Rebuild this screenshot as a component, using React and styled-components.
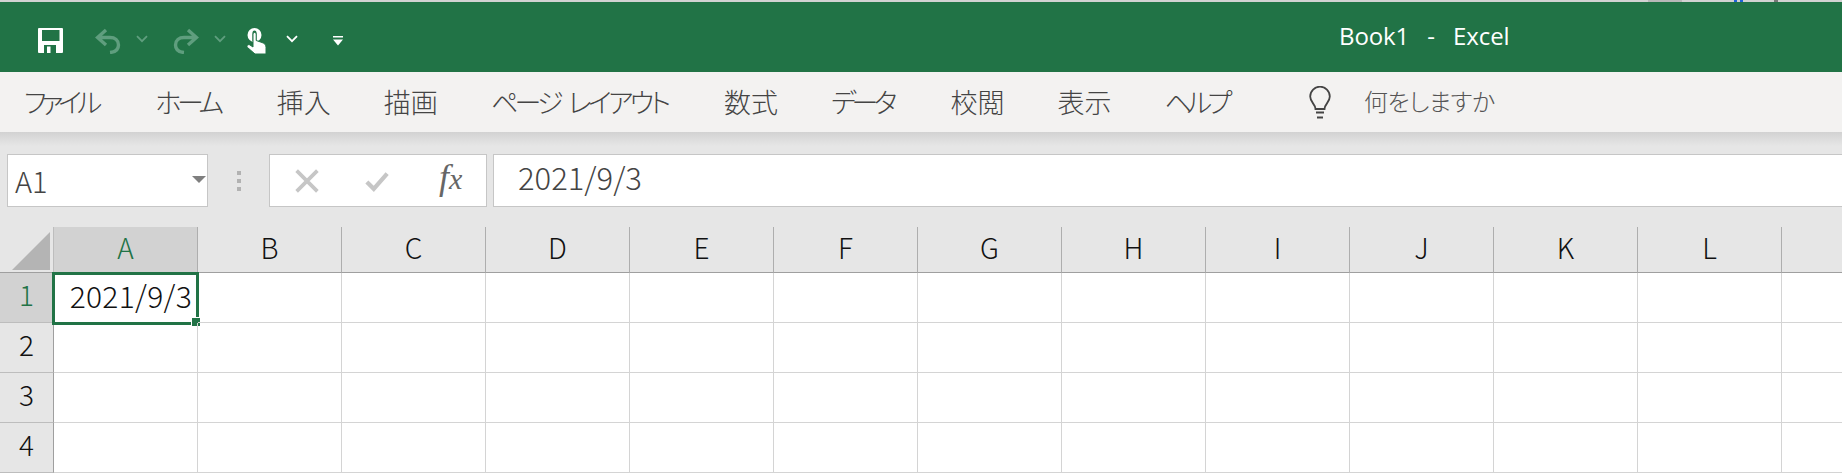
import React from "react";
import styled, { createGlobalStyle } from "styled-components";

const JP = `"Noto Sans CJK JP", "Noto Sans", sans-serif`;
const GREEN = "#217346";

const tabs = [
  { label: "ファイル", tight: 5.1 },
  { label: "ホーム", tight: 4.3 },
  { label: "挿入", tight: 0 },
  { label: "描画", tight: 0 },
  { label: "ページ レイアウト", tight: 3.7 },
  { label: "数式", tight: 0 },
  { label: "データ", tight: 4.5 },
  { label: "校閲", tight: 0 },
  { label: "表示", tight: 0 },
  { label: "ヘルプ", tight: 4.9 },
];
const columns = ["A", "B", "C", "D", "E", "F", "G", "H", "I", "J", "K", "L", ""];
const rows = [1, 2, 3, 4];

const Chevron = ({ faint }) => (
  <ChevronIcon viewBox="0 0 12 8" $faint={faint}>
    <path d="M1 1.2 6 6.2 11 1.2" fill="none" stroke="currentColor" strokeWidth="1.8" />
  </ChevronIcon>
);

const App = () => {
  return (
    <Page>
      <GlobalStyle />
      <TopStrip />
      <TitleBar>
        <QuickAccess>
          <SaveIcon viewBox="0 0 25 25">
            <path
              fillRule="evenodd"
              fill="#fff"
              d="M1 0H24a1 1 0 0 1 1 1V24a1 1 0 0 1-1 1H1a1 1 0 0 1-1-1V1a1 1 0 0 1 1-1ZM4 2V13H21.500V2ZM6 17V25H18V17ZM9 18.500H12.500V25H9Z"
            />
          </SaveIcon>
          <UndoIcon viewBox="0 0 26 26">
            <path
              d="M11 2 2.500 9.500 11 17M3 9.500H15C20 9.500 23.500 12.500 23.500 17S20 24 15 24.500"
              fill="none"
              stroke="currentColor"
              strokeWidth="3.400"
            />
          </UndoIcon>
          <Chevron faint />
          <RedoIcon viewBox="0 0 26 26">
            <path
              d="M15 2 23.500 9.500 15 17M23 9.500H11C6 9.500 2.500 12.500 2.500 17S6 24 11 24.500"
              fill="none"
              stroke="currentColor"
              strokeWidth="3.400"
            />
          </RedoIcon>
          <Chevron faint />
          <TouchIcon viewBox="0 0 20 26">
            <circle cx="8.500" cy="7" r="7" fill="#fff" />
            <path d="M6.500 4.500a2 2 0 0 1 4 0V13H6.500Z" fill={GREEN} />
            <path
              fill="#fff"
              stroke={GREEN}
              strokeWidth="1"
              d="M7 6a1.600 1.600 0 0 1 3.200 0V12.500L16 14.500C19 15.500 20 17 20 19.500V26H9L1.500 19.500C0 18 2 15.800 4 17L7 19Z"
            />
          </TouchIcon>
          <Chevron />
          <CustomizeIcon viewBox="0 0 10 10">
            <path d="M0 0H10V1.500H0Z M0 3.500H10L5 9.500Z" fill="#fff" />
          </CustomizeIcon>
        </QuickAccess>
        <WindowTitle>Book1 - Excel</WindowTitle>
      </TitleBar>

      <Ribbon>
        <TabList>
          {tabs.map((tab) => (
            <Tab key={tab.label} $tight={tab.tight}>
              {tab.label}
            </Tab>
          ))}
        </TabList>
        <BulbIcon viewBox="0 0 22 33">
          <path
            d="M6.500 23C6.500 18 1.200 16.500 1.200 10.500a9.800 9.800 0 0 1 19.600 0C20.800 16.500 15.500 18 15.500 23ZM7 26.500H15M8 31.500H14"
            fill="none"
            stroke="#444"
            strokeWidth="1.800"
          />
        </BulbIcon>
        <SearchHint>何をしますか</SearchHint>
      </Ribbon>

      <FormulaBar>
        <NameBox>
          <NameText>A1</NameText>
          <NameCaret />
        </NameBox>
        <Grip>
          <i />
          <i />
          <i />
        </Grip>
        <FuncBox>
          <FuncIcon viewBox="0 0 22 22">
            <path d="M1.500 1.500 20.500 20.500M20.500 1.500 1.500 20.500" stroke="#c6c6c6" strokeWidth="3.400" />
          </FuncIcon>
          <FuncIcon viewBox="0 0 26 22">
            <path d="M2 12 9.500 19.500 24 3" fill="none" stroke="#c6c6c6" strokeWidth="4.600" />
          </FuncIcon>
          <FxText>
            f<sub>x</sub>
          </FxText>
        </FuncBox>
        <FormulaInput>2021/9/3</FormulaInput>
      </FormulaBar>

      <Sheet>
        <Corner>
          <CornerTriangle />
        </Corner>
        {columns.map((col, i) => (
          <ColumnHeader key={i} $active={col === "A"}>
            {col}
          </ColumnHeader>
        ))}
        {rows.map((row) => (
          <React.Fragment key={row}>
            <RowHeader $active={row === 1}>{row}</RowHeader>
            {columns.map((col, i) => (
              <Cell key={i}>
                {row === 1 && col === "A" && (
                  <>
                    <CellValue>2021/9/3</CellValue>
                    <Selection />
                    <FillHandle />
                  </>
                )}
              </Cell>
            ))}
          </React.Fragment>
        ))}
      </Sheet>
    </Page>
  );
};

export default App;

const GlobalStyle = createGlobalStyle`
  html, body {
    margin: 0;
    padding: 0;
    background: #fff;
    overflow: hidden;
  }
`;
const Page = styled.div`
  width: 1842px;
  height: 474px;
  overflow: hidden;
  display: flex;
  flex-direction: column;
  background: #e6e6e6;
  font-family: ${JP};
`;
const TopStrip = styled.div`
  height: 2px;
  background: linear-gradient(
    90deg,
    #d2d2d2 1648px,
    #b8b8b8 1648px 1682px,
    #d2d2d2 1682px 1734px,
    #1f62d8 1734px 1737px,
    #d2d2d2 1737px 1740px,
    #1f62d8 1740px 1743px,
    #d2d2d2 1743px 1774px,
    #777 1774px 1778px,
    #d2d2d2 1778px
  );
`;
const TitleBar = styled.div`
  height: 70px;
  display: flex;
  align-items: center;
  background: ${GREEN};
`;
const QuickAccess = styled.div`
  width: 1339px;
  height: 100%;
  padding: 7px 0 0 38px;
  box-sizing: border-box;
  display: flex;
  align-items: center;
`;
const SaveIcon = styled.svg`
  width: 25px;
  height: 25px;
`;
const UndoIcon = styled.svg`
  width: 26px;
  height: 26px;
  margin-left: 32px;
  color: #5f9e7e;
`;
const RedoIcon = styled(UndoIcon)`
  margin-left: 25px;
`;
const ChevronIcon = styled.svg`
  width: 12px;
  height: 8px;
  margin: -4px 0 0 15px;
  color: ${(p) => (p.$faint ? "#5f9e7e" : "#fff")};
`;
const TouchIcon = styled.svg`
  width: 20px;
  height: 26px;
  margin-left: 20px;
  margin-right: 5px;
`;
const CustomizeIcon = styled.svg`
  width: 10px;
  height: 10px;
  margin-left: 35px;
`;
const WindowTitle = styled.div`
  font-family: "Open Sans", "Noto Sans", sans-serif;
  font-size: 24px;
  letter-spacing: -0.1px;
  color: #fff;
  white-space: pre;
  word-spacing: 12px;
  margin-top: -3px;
`;
const Ribbon = styled.div`
  height: 60px;
  display: flex;
  align-items: center;
  padding-left: 24px;
  background: #f3f2f1;
  color: #444;
  position: relative;
  z-index: 1;
`;
const TabList = styled.div`
  width: 1285px;
  margin-top: -2px;
  display: flex;
  gap: 53px;
`;
const Tab = styled.div`
  font-size: 27px;
  font-weight: 300;
  white-space: nowrap;
  font-feature-settings: "palt";
  word-spacing: 6px;
  letter-spacing: ${(p) => -p.$tight}px;
  margin-right: ${(p) => p.$tight}px;
`;
const BulbIcon = styled.svg`
  width: 22px;
  height: 33px;
  margin-right: 33px;
`;
const SearchHint = styled.div`
  font-size: 24px;
  font-weight: 300;
  color: #555;
  margin-top: -4px;
  letter-spacing: -0.5px;
  font-feature-settings: "palt";
`;
const FormulaBar = styled.div`
  height: 95px;
  padding: 22px 0 20px 7px;
  box-sizing: border-box;
  display: flex;
  background: linear-gradient(#d2d2d2, #e6e6e6 14px);
`;
const NameBox = styled.div`
  width: 201px;
  box-sizing: border-box;
  border: 1px solid #c6c6c6;
  background: #fff;
  display: flex;
  align-items: center;
  justify-content: space-between;
  padding: 0 1px 0 7px;
`;
const NameText = styled.span`
  font-size: 29px;
  font-weight: 300;
  color: #444;
  margin-top: -1px;
`;
const NameCaret = styled.span`
  width: 0;
  height: 0;
  border-left: 7px solid transparent;
  border-right: 7px solid transparent;
  border-top: 7px solid #7f7f7f;
  margin-top: -2px;
`;
const Grip = styled.div`
  width: 61px;
  display: flex;
  flex-direction: column;
  align-items: center;
  justify-content: center;
  gap: 4px;
  & > i {
    width: 4px;
    height: 4px;
    background: #b2b2b2;
  }
`;
const FuncBox = styled.div`
  width: 218px;
  box-sizing: border-box;
  border: 1px solid #c6c6c6;
  background: #fff;
  display: flex;
  align-items: center;
  padding-left: 25px;
  gap: 46px;
`;
const FuncIcon = styled.svg`
  width: 24px;
  height: 24px;
`;
const FxText = styled.span`
  font-family: "Liberation Serif", serif;
  font-style: italic;
  font-size: 36px;
  line-height: 40px;
  color: #666;
  margin: -6px 0 0 4px;
  & > sub {
    font-size: 30px;
    vertical-align: baseline;
  }
`;
const FormulaInput = styled.div`
  flex: 1;
  margin-left: 6px;
  border: 1px solid #c6c6c6;
  border-right: none;
  background: #fff;
  display: flex;
  align-items: center;
  padding: 0 0 8px 24px;
  font-size: 31px;
  font-weight: 300;
  color: #444;
`;
const Sheet = styled.div`
  flex: 1;
  display: grid;
  grid-template-columns: 54px repeat(13, 144px);
  grid-template-rows: 46px repeat(4, 50px);
  background: #fff;
`;
const Corner = styled.div`
  background: #e6e6e6;
  border-bottom: 1px solid #9f9f9f;
  border-right: 1px solid #bdbdbd;
  box-sizing: border-box;
  position: relative;
`;
const CornerTriangle = styled.div`
  position: absolute;
  right: 3px;
  bottom: 2px;
  width: 0;
  height: 0;
  border-left: 38px solid transparent;
  border-bottom: 38px solid #b4b4b4;
`;
const ColumnHeader = styled.div`
  box-sizing: border-box;
  background: ${(p) => (p.$active ? "#d2d2d2" : "#e6e6e6")};
  color: ${(p) => (p.$active ? GREEN : "#111")};
  border-right: 1px solid #aeaeae;
  border-bottom: 1px solid #9f9f9f;
  display: flex;
  align-items: center;
  justify-content: center;
  font-size: 28px;
  font-weight: 300;
  padding-bottom: 5px;
`;
const RowHeader = styled.div`
  box-sizing: border-box;
  background: ${(p) => (p.$active ? "#d2d2d2" : "#e6e6e6")};
  color: ${(p) => (p.$active ? GREEN : "#111")};
  border-right: 1px solid #9f9f9f;
  border-bottom: 1px solid #bdbdbd;
  display: flex;
  align-items: center;
  justify-content: center;
  font-size: 28px;
  font-weight: 300;
  padding-bottom: 7px;
`;
const Cell = styled.div`
  box-sizing: border-box;
  position: relative;
  border-right: 1px solid #d4d4d4;
  border-bottom: 1px solid #d4d4d4;
  display: flex;
  align-items: center;
  justify-content: flex-end;
`;
const CellValue = styled.span`
  font-size: 30px;
  font-weight: 300;
  letter-spacing: 0.3px;
  color: #111;
  padding-right: 5px;
  margin-top: -5px;
`;
const Selection = styled.div`
  position: absolute;
  left: -2px;
  top: -1px;
  right: -2px;
  bottom: -3px;
  border: 3px solid ${GREEN};
`;
const FillHandle = styled.div`
  position: absolute;
  right: -3px;
  bottom: -4px;
  width: 8px;
  height: 8px;
  background: ${GREEN};
  border-left: 1px solid #fff;
  border-top: 1px solid #fff;
`;
